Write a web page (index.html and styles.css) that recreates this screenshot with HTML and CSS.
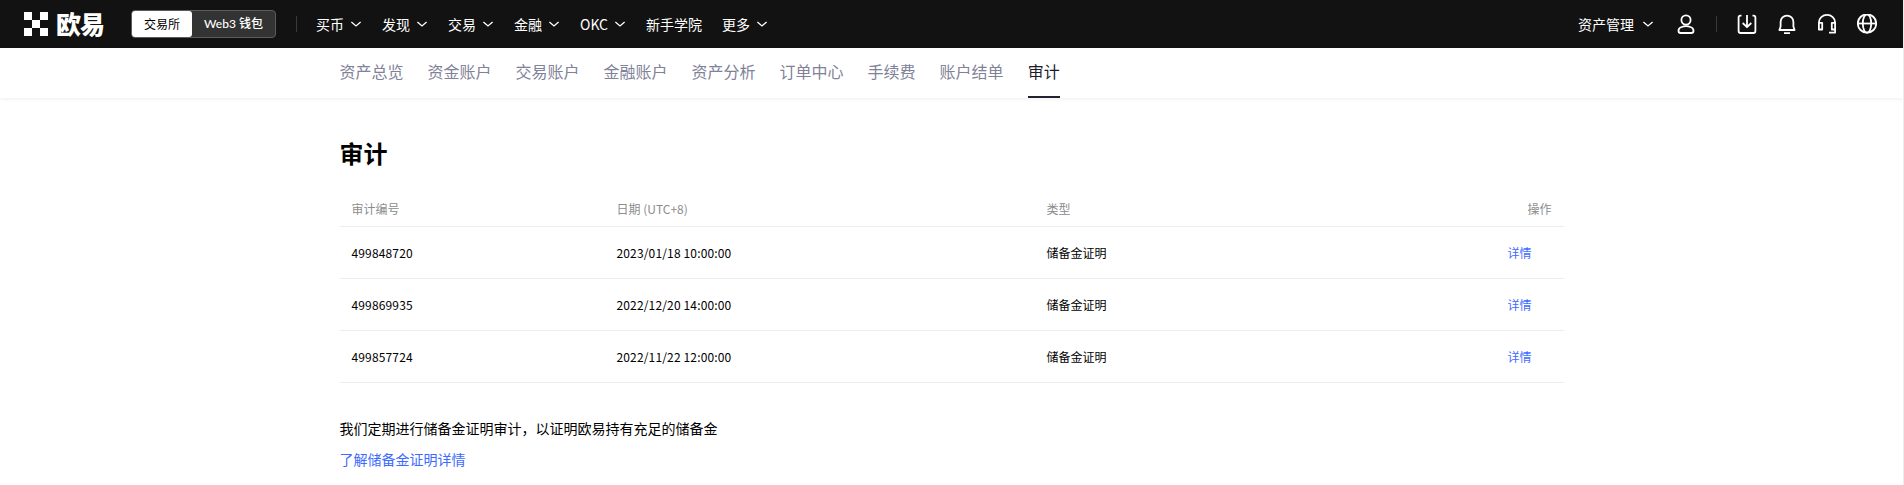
FILE: index.html
```html
<!DOCTYPE html>
<html lang="zh-CN">
<head>
<meta charset="utf-8">
<title>审计</title>
<link rel="stylesheet" href="styles.css">
</head>
<body>
<svg width="0" height="0" class="defs"><symbol id="chev" viewBox="0 0 12 12"><path d="M1.400 4 6 7.900 10.600 4" fill="none" stroke="currentColor" stroke-width="1.300"/></symbol></svg>
<header class="top">
  <div class="logo">
    <svg width="24" height="24" viewBox="0 0 24 24" fill="#fff"><path d="M0 0h8v8H0zM16 0h8v8h-8zM8 8h8v8H8zM0 16h8v8H0zM16 16h8v8h-8z"/></svg>
    <span class="brand">欧易</span>
  </div>
  <div class="switch"><span class="on">交易所</span><span class="off">Web3 钱包</span></div>
  <i class="divider"></i>
  <nav class="menu">
    <a>买币<svg><use href="#chev"/></svg></a>
    <a>发现<svg><use href="#chev"/></svg></a>
    <a>交易<svg><use href="#chev"/></svg></a>
    <a>金融<svg><use href="#chev"/></svg></a>
    <a><span class="okc">OKC</span><svg><use href="#chev"/></svg></a>
    <a>新手学院</a>
    <a>更多<svg><use href="#chev"/></svg></a>
  </nav>
  <div class="tools">
    <a class="assets">资产管理<svg><use href="#chev"/></svg></a>
    <svg class="icon" viewBox="0 0 20 20"><circle cx="10" cy="6" r="4.600"/><path d="M5.600 13q4.400-1.600 8.800 0 3.100 1 3.100 3.700 0 2.300-2.200 2.300H4.700q-2.200 0-2.200-2.300 0-2.700 3.100-3.700z"/></svg>
    <i class="divider"></i>
    <svg class="icon" viewBox="0 0 20 20"><path d="M4.500 1.700H3.400Q1.600 1.700 1.600 3.500V17Q1.600 19 3.600 19H16.400Q18.400 19 18.400 17V3.500Q18.400 1.700 16.600 1.700H15.500M10 1v12M5.700 9 10 13.200 14.300 9"/></svg>
    <svg class="icon" viewBox="0 0 20 20"><path d="M3.600 12.500V8a6.400 6.400 0 0 1 12.800 0v4.500L17.600 16H2.400zM7 19.100h6"/></svg>
    <svg class="icon" viewBox="0 0 20 20"><path d="M1.900 10V8.500a8.100 7.600 0 0 1 16.200 0V18.600H12M1.900 8.800h3.300v6.700H1.900zM18.100 8.800h-3.300v6.700h3.300z"/></svg>
    <svg class="icon" viewBox="0 0 20 20"><circle cx="10" cy="9.500" r="9.200"/><ellipse cx="10" cy="9.500" rx="4.200" ry="9.200"/><path d="M1 9.500h18"/></svg>
  </div>
</header>
<nav class="tabs">
  <a>资产总览</a><a>资金账户</a><a>交易账户</a><a>金融账户</a><a>资产分析</a><a>订单中心</a><a>手续费</a><a>账户结单</a><a class="active">审计</a>
</nav>
<main class="content">
  <h1>审计</h1>
  <table>
    <thead><tr><th class="c1">审计编号</th><th class="c2">日期 (UTC+8)</th><th class="c3">类型</th><th class="c4">操作</th></tr></thead>
    <tbody>
      <tr><td><span class="num id">499848720</span></td><td><span class="num">2023/01/18 10:00:00</span></td><td>储备金证明</td><td class="act"><a>详情</a></td></tr>
      <tr><td><span class="num id">499869935</span></td><td><span class="num">2022/12/20 14:00:00</span></td><td>储备金证明</td><td class="act"><a>详情</a></td></tr>
      <tr><td><span class="num id">499857724</span></td><td><span class="num">2022/11/22 12:00:00</span></td><td>储备金证明</td><td class="act"><a>详情</a></td></tr>
    </tbody>
  </table>
  <p class="note">我们定期进行储备金证明审计，以证明欧易持有充足的储备金</p>
  <a class="more">了解储备金证明详情</a>
</main>
</body>
</html>
```
FILE: styles.css
```css
* { box-sizing: border-box; }
html { background: #fff; }
body { margin: 0; height: 485px; overflow: hidden; border-right: 1px solid #ededed; color: #000; font-family: "Noto Sans CJK SC", sans-serif; font-size: 14px; }
.defs { display: block; height: 0; }
.top { height: 48px; background: #121212; color: #fff; display: flex; align-items: center; padding: 0 26px 0 24px; }
.logo { display: flex; align-items: center; gap: 8px; width: 107px; }
.brand { font-size: 25px; font-weight: 900; line-height: 46px; height: 48px; letter-spacing: -1px; white-space: nowrap; }
.switch { display: flex; width: 145px; height: 28px; border: 1px solid #5c5c5c; border-radius: 4px; background: #333; font-size: 12px; line-height: 26px; text-align: center; }
.on { width: 60px; background: #fff; color: #000; border-radius: 3px; }
.off { flex: 1; font-weight: 500; font-family: Lato, "Noto Sans CJK SC", sans-serif; }
.divider { width: 1px; height: 16px; background: #3a3a3a; }
.switch + .divider { margin: 0 19px 0 20px; }
.menu { display: flex; gap: 20px; line-height: 47px; height: 48px; }
.menu a, .assets { display: flex; align-items: center; font-weight: 400; white-space: nowrap; }
.menu svg, .assets svg { width: 12px; height: 12px; margin-left: 6px; }
.okc { width: 28px; white-space: nowrap; }
.tools { margin-left: auto; display: flex; align-items: center; gap: 20px; }
.assets { margin-right: 2px; }
.assets svg { margin-left: 8px; }
.icon { width: 20px; height: 20px; fill: none; stroke: #fff; stroke-width: 1.800; stroke-linejoin: round; }
.tabs { height: 50px; display: flex; gap: 24px; padding-left: 339.500px; font-size: 16px; line-height: 46px; color: #7f8299; font-weight: 400; box-shadow: 0 1px 4px rgba(0,0,0,.07); }
.tabs .active { color: #1c1c2c; border-bottom: 2px solid #222233; }
.content { width: 1224px; margin-left: 339.500px; }
h1 { margin: 0; padding-top: 37px; height: 96px; font-size: 24px; line-height: 36px; font-weight: 700; }
table { width: 1224px; border-collapse: separate; border-spacing: 0; table-layout: fixed; font-size: 12px; }
th, td { padding: 0 12px; text-align: left; border-bottom: 1px solid #ededed; font-weight: 400; }
th { height: 33px; line-height: 18px; padding-bottom: 3px; color: #8c8c8c; }
td { height: 52px; line-height: 20px; }
.c1 { width: 265px; }
.c2 { width: 430px; }
.c3 { width: 350px; }
.c4 { text-align: right; }
.act { text-align: right; padding-right: 32px; }
.act a, .more { color: #3d6bff; }
.num { display: inline-block; letter-spacing: .15px; }
.note { margin: 35px 0 0; line-height: 20px; }
.more { display: block; margin-top: 11px; line-height: 20px; }
```
